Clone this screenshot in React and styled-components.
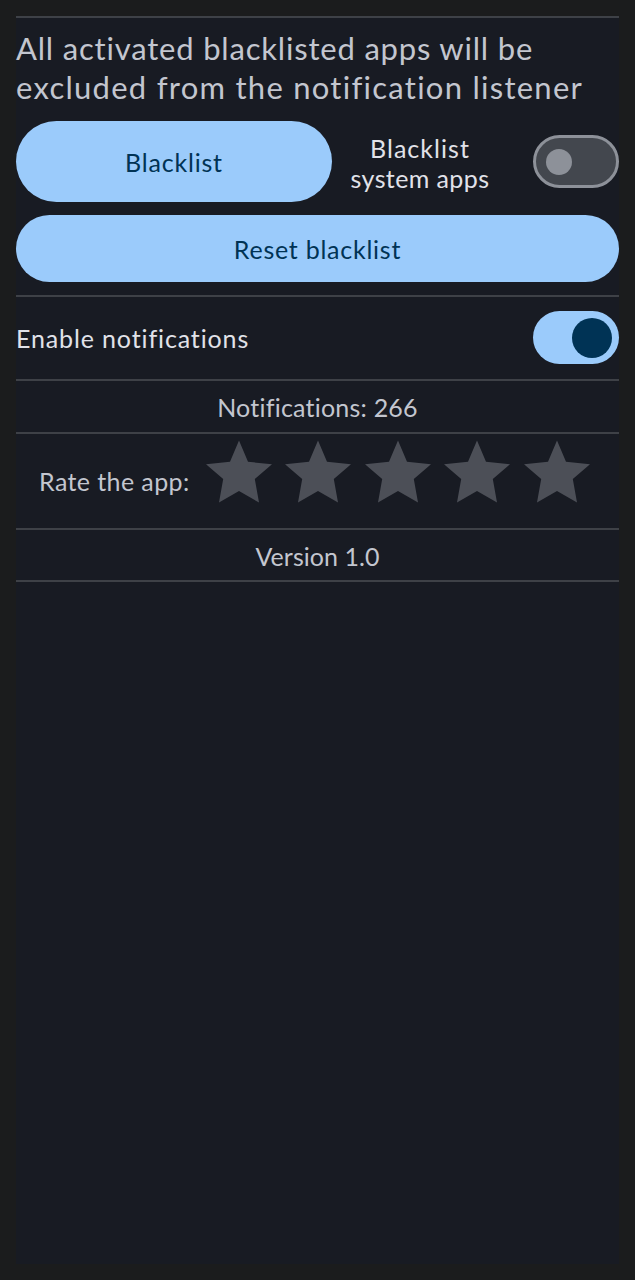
import React from 'react';
import styled, { createGlobalStyle } from 'styled-components';

const GlobalStyle = createGlobalStyle`
  * { box-sizing: border-box; }
  body { margin: 0; background: #1b1c1d; }
`;

const Screen = styled.main`
  height: 1280px;
  padding: 16px;
  background: #1b1c1d;
  font-family: Lato, "Open Sans", sans-serif;
  font-size: 25px;
  color: #c3c6cf;
`;

const Panel = styled.section`
  height: 1248px;
  background: #181b23;
`;

const Divider = styled.hr`
  height: 2px;
  margin: 0;
  border: 0;
  background: #3e4147;
`;

const Label = styled.span`
  display: block;
  white-space: nowrap;
  line-height: 30px;
  color: ${(p) => p.$color || 'inherit'};
  letter-spacing: ${(p) => p.$track || 0}px;
`;

const Heading = styled.h1`
  margin: 0;
  height: 103px;
  padding-top: 11px;
  font-size: 31px;
  font-weight: 400;
`;

const HeadingLine = styled(Label)`
  line-height: 39px;
`;

const Row = styled.div`
  display: flex;
  align-items: center;
  justify-content: space-between;
  height: ${(p) => p.$height}px;
`;

const ToggleRow = styled(Row)`
  padding-bottom: 1px;
`;

const Button = styled.button`
  display: flex;
  align-items: center;
  justify-content: center;
  width: ${(p) => p.$width};
  height: ${(p) => p.$height}px;
  padding: 0;
  border: 0;
  border-radius: 41px;
  background: #9bcbfb;
  color: #003355;
  font: inherit;
`;

const SystemLabel = styled.div`
  display: flex;
  flex-direction: column;
  align-items: center;
  width: 175px;
  margin-right: 25px;
  padding-top: 2px;
`;

const Switch = styled.div`
  display: flex;
  align-items: center;
  justify-content: ${(p) => (p.$on ? 'flex-end' : 'flex-start')};
  width: 86px;
  height: 53px;
  padding: ${(p) => (p.$on ? '0 7px' : '0 10px')};
  border: ${(p) => (p.$on ? '0' : '3.5px solid #8d9199')};
  border-radius: 27px;
  background: ${(p) => (p.$on ? '#9bcbfb' : '#43474e')};
`;

const Thumb = styled.div`
  width: ${(p) => (p.$on ? 40 : 26)}px;
  height: ${(p) => (p.$on ? 40 : 26)}px;
  border-radius: 50%;
  background: ${(p) => (p.$on ? '#003355' : '#8d9199')};
`;

const ResetArea = styled.div`
  height: 81px;
  padding-top: 1px;
`;

const Info = styled.div`
  display: flex;
  justify-content: center;
  height: ${(p) => p.$height}px;
  padding-top: 11px;
`;

const Rating = styled.div`
  display: flex;
  height: 94px;
  padding: 6px 0 0 23px;
`;

const RateLabel = styled.div`
  width: 167px;
  padding-top: 26px;
`;

const Stars = styled.div`
  display: flex;
  gap: 13.4px;
`;

const StarIcon = styled.svg`
  flex: none;
  width: 66px;
  height: 63px;
  fill: #4c4f57;
`;

const Star = () => (
  <StarIcon viewBox="0 0 66 63">
    <path d="M33 0.5 42 21.8 66 24.2 48.8 39 53 62.5 33 51 13 62.5 17.2 39 0 24.2 24 21.8Z" />
  </StarIcon>
);

export default function App() {
  return (
    <>
      <GlobalStyle />
      <Screen>
        <Panel>
          <Divider />
          <Heading>
            <HeadingLine $track={0.81}>All activated blacklisted apps will be</HeadingLine>
            <HeadingLine $track={1.26}>excluded from the notification listener</HeadingLine>
          </Heading>
          <Row $height={81}>
            <Button $width="316px" $height={81}>
              <Label $track={0.8}>Blacklist</Label>
            </Button>
            <SystemLabel>
              <Label $color="#e1e2e9" $track={1.05}>Blacklist</Label>
              <Label $color="#e1e2e9" $track={0.4}>system apps</Label>
            </SystemLabel>
            <Switch role="switch" aria-checked="false"><Thumb /></Switch>
          </Row>
          <Row $height={12} />
          <ResetArea>
            <Button $width="100%" $height={67}>
              <Label $track={0.75}>Reset blacklist</Label>
            </Button>
          </ResetArea>
          <Divider />
          <ToggleRow $height={82}>
            <Label $color="#e1e2e9" $track={0.87}>Enable notifications</Label>
            <Switch role="switch" aria-checked="true" $on><Thumb $on /></Switch>
          </ToggleRow>
          <Divider />
          <Info $height={51}><Label $track={0.22}>Notifications: 266</Label></Info>
          <Divider />
          <Rating>
            <RateLabel><Label $track={0.4}>Rate the app:</Label></RateLabel>
            <Stars>
              {[1, 2, 3, 4, 5].map((n) => <Star key={n} />)}
            </Stars>
          </Rating>
          <Divider />
          <Info $height={50}><Label $track={0.05}>Version 1.0</Label></Info>
          <Divider />
        </Panel>
      </Screen>
    </>
  );
}
